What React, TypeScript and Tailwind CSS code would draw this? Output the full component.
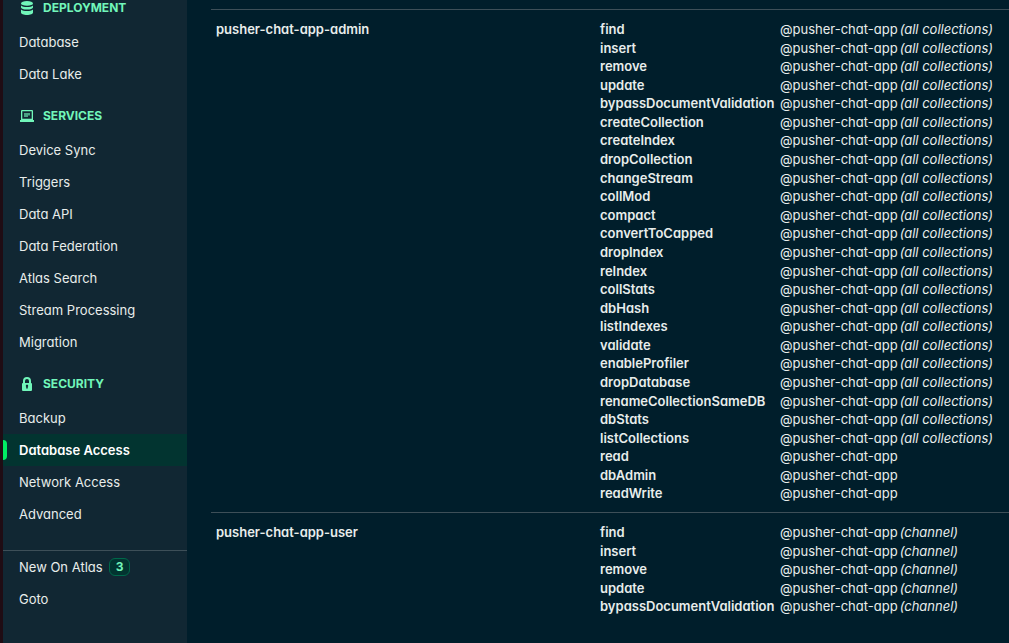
import type { ReactNode } from "react";

type Privilege = { action: string; scope?: string };
type Role = { name: string; database: string; privileges: Privilege[] };

const withScope = (actions: string[], scope?: string): Privilege[] =>
  actions.map((action) => ({ action, scope }));

const roles: Role[] = [
  {
    name: "pusher-chat-app-admin",
    database: "@pusher-chat-app",
    privileges: [
      ...withScope(
        [
          "find", "insert", "remove", "update", "bypassDocumentValidation",
          "createCollection", "createIndex", "dropCollection", "changeStream",
          "collMod", "compact", "convertToCapped", "dropIndex", "reIndex",
          "collStats", "dbHash", "listIndexes", "validate", "enableProfiler",
          "dropDatabase", "renameCollectionSameDB", "dbStats", "listCollections",
        ],
        "(all collections)",
      ),
      ...withScope(["read", "dbAdmin", "readWrite"]),
    ],
  },
  {
    name: "pusher-chat-app-user",
    database: "@pusher-chat-app",
    privileges: withScope(
      ["find", "insert", "remove", "update", "bypassDocumentValidation"],
      "(channel)",
    ),
  },
];

function DatabaseIcon() {
  return (
    <svg viewBox="0 0 16 16" className="size-4 shrink-0" fill="currentColor" aria-hidden="true">
      <ellipse cx="8" cy="3.4" rx="6" ry="2.400" />
      <path d="M2 5.400c1.200 1.200 3.500 1.700 6 1.700s4.800-.5 6-1.700v1.800c0 1.400-2.700 2.400-6 2.400s-6-1-6-2.400z" />
      <path d="M2 9.400c1.200 1.200 3.500 1.700 6 1.700s4.800-.5 6-1.700v3.100c0 1.400-2.700 2.500-6 2.500s-6-1.100-6-2.500z" />
    </svg>
  );
}

function LaptopIcon() {
  return (
    <svg viewBox="0 0 16 16" className="size-4 shrink-0" fill="currentColor" aria-hidden="true">
      <path fillRule="evenodd" d="M2 3a1 1 0 0 1 1-1h10a1 1 0 0 1 1 1v9H2zM3.300 3.300v7.400h9.400V3.300z" />
      <path d="M1 12h14v1.500a.5.5 0 0 1-.5.5h-13a.5.5 0 0 1-.5-.5z" />
      <path opacity=".6" d="M5 5h6v2.500H9V9H5z" />
    </svg>
  );
}

function LockIcon() {
  return (
    <svg viewBox="0 0 16 16" className="size-4 shrink-0" fill="currentColor" aria-hidden="true">
      <path
        fillRule="evenodd"
        d="M4 7V5a4 4 0 1 1 8 0v2a1 1 0 0 1 1 1v6a1 1 0 0 1-1 1H4a1 1 0 0 1-1-1V8a1 1 0 0 1 1-1zm2 0h4V5a2 2 0 1 0-4 0zm1.200 3.800v1.700h1.600v-1.700a1.200 1.200 0 1 0-1.600 0z"
      />
    </svg>
  );
}

function NavItem({ label, active, badge }: { label: string; active?: boolean; badge?: string }) {
  return (
    <li>
      <a
        href="#"
        aria-current={active ? "page" : undefined}
        className={
          active
            ? "relative flex h-8 items-center bg-[#023430] px-4 pt-0.5 font-semibold text-white"
            : "flex h-8 items-center gap-1.5 px-4 pt-0.5 text-[#e8edeb]"
        }
      >
        {active && <span className="absolute inset-y-1.5 left-0 w-1 rounded-r-md bg-[#00ed64]" />}
        {label}
        {badge && (
          <span className="-mt-0.5 flex h-[18px] items-center rounded-md border border-[#00684a] bg-[#023430] px-1.5 text-xs font-bold text-[#71f6ba]">
            {badge}
          </span>
        )}
      </a>
    </li>
  );
}

function NavSection({ title, icon, items, active }: { title: string; icon: ReactNode; items: string[]; active?: string }) {
  return (
    <section>
      <h2 className="flex h-9 items-center gap-2 px-4 text-xs font-bold text-[#71f6ba]">
        {icon}
        {title}
      </h2>
      <ul>
        {items.map((item) => (
          <NavItem key={item} label={item} active={item === active} />
        ))}
      </ul>
    </section>
  );
}

export default function App() {
  return (
    <div className="flex h-screen overflow-hidden bg-[#001e2b] font-['Inter',sans-serif] text-[13px] text-[#e8edeb] [font-feature-settings:'cv11']">
      <nav className="w-[187px] shrink-0 border-l-3 border-[#1f0c14] bg-[#112733]">
        <div className="-mt-2.5 flex flex-col gap-2">
          <NavSection title="DEPLOYMENT" icon={<DatabaseIcon />} items={["Database", "Data Lake"]} />
          <NavSection
            title="SERVICES"
            icon={<LaptopIcon />}
            items={["Device Sync", "Triggers", "Data API", "Data Federation", "Atlas Search", "Stream Processing", "Migration"]}
          />
          <NavSection
            title="SECURITY"
            icon={<LockIcon />}
            items={["Backup", "Database Access", "Network Access", "Advanced"]}
            active="Database Access"
          />
        </div>
        <ul className="mt-5 border-t border-t-[#3d4f58]">
          <NavItem label="New On Atlas" badge="3" />
          <NavItem label="Goto" />
        </ul>
      </nav>
      <main className="min-w-0 flex-1 overflow-hidden pt-[9px] pl-6">
        <table className="w-full table-fixed border-collapse text-left leading-[1.43]">
          <tbody>
            {roles.map((role) => (
              <tr key={role.name} className="border-t border-[#3d4f58] align-top">
                <th scope="row" className="w-[384px] px-[5px] pt-2.5 pb-[9px] font-semibold">
                  {role.name}
                </th>
                <td className="px-[5px] pt-2.5 pb-[9px]">
                  <ul>
                    {role.privileges.map(({ action, scope }) => (
                      <li key={action} className="flex gap-0.5 whitespace-nowrap">
                        <span className="w-[178px] shrink-0 font-semibold">{action}</span>
                        <span>{role.database}</span>
                        {scope && <em>{scope}</em>}
                      </li>
                    ))}
                  </ul>
                </td>
              </tr>
            ))}
          </tbody>
        </table>
      </main>
    </div>
  );
}
